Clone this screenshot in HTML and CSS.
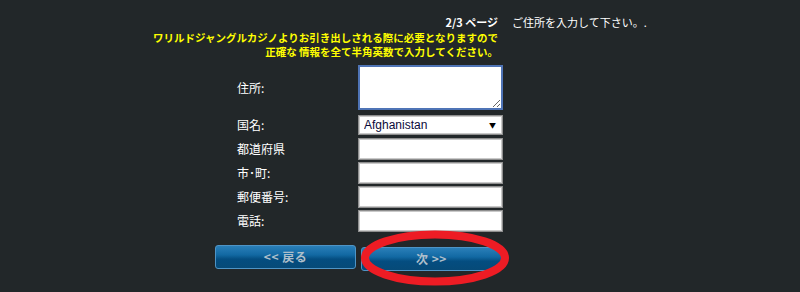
FILE: index.html
```html
<!DOCTYPE html>
<html lang="ja">
<head>
<meta charset="utf-8">
<link rel="stylesheet" href="styles.css">
</head>
<body>
<div class="page">
  <div class="header">
    <div class="header-left">
      <div class="step">2/3 ページ</div>
      <div class="notice">ワリルドジャングルカジノよりお引き出しされる際に必要となりますので</div>
      <div class="notice">正確な 情報を全て半角英数で入力してください。</div>
    </div>
    <div class="header-right">ご住所を入力して下さい。.</div>
  </div>

  <div class="form">
    <label class="label">住所:</label>
    <textarea class="field area"></textarea>

    <label class="label row-select">国名:</label>
    <div class="select-wrap row-select">
      <select class="field select"><option>Afghanistan</option></select>
      <span class="arrow">▼</span>
    </div>

    <label class="label">都道府県</label>
    <input class="field text" type="text">

    <label class="label">市･町:</label>
    <input class="field text" type="text">

    <label class="label">郵便番号:</label>
    <input class="field text" type="text">

    <label class="label">電話:</label>
    <input class="field text" type="text">
  </div>

  <div class="buttons">
    <button class="btn">&lt;&lt; 戻る</button>
    <div class="next-wrap">
      <button class="btn">次 &gt;&gt;</button>
      <svg class="circle" width="152" height="58" viewBox="0 0 152 58">
        <ellipse cx="76" cy="28" rx="70" ry="23.5" fill="none" stroke="#ed1c24" stroke-width="8"/>
      </svg>
    </div>
  </div>
</div>
</body>
</html>
```
FILE: styles.css
```css
html, body {
  margin: 0;
  padding: 0;
  background: #222729;
}
body {
  font-family: "Noto Sans CJK JP", "Noto Sans", sans-serif;
  color: #ffffff;
}
.page {
  width: 800px;
  height: 292px;
  padding-top: 15px;
  box-sizing: border-box;
}
.header {
  display: flex;
  align-items: flex-start;
}
.header-left {
  width: 498px;
  text-align: right;
}
.step {
  font-size: 11px;
  font-weight: bold;
  line-height: 14px;
  margin-bottom: 2px;
}
.notice {
  font-size: 10.5px;
  font-weight: bold;
  line-height: 14px;
  color: #ffff00;
  white-space: nowrap;
}
.header-right {
  margin-left: 14px;
  font-size: 11px;
  line-height: 14px;
}
.form {
  margin-top: 6px;
  margin-left: 237px;
  display: grid;
  grid-template-columns: 121px 145px;
  row-gap: 2px;
  align-items: center;
}
.label {
  font-size: 12px;
  line-height: 16px;
  white-space: nowrap;
}
.row-select {
  margin-top: 3px;
  margin-bottom: 1px;
}
.field {
  box-sizing: border-box;
  width: 145px;
  margin: 0;
  background: #ffffff;
  border: 1px solid #8e8e8e;
  box-shadow: inset 0 0 0 1px #c9c9c9;
  border-radius: 0;
  outline: none;
}
.area {
  height: 45px;
  border: 2px solid #4f74b6;
  box-shadow: none;
  display: block;
}
.text {
  height: 22px;
  display: block;
}
.select-wrap {
  position: relative;
  width: 145px;
  height: 20px;
}
.select {
  display: block;
  -webkit-appearance: none;
  appearance: none;
  height: 20px;
  line-height: 18px;
  padding: 0 0 0 5px;
  font-family: "Liberation Sans", Arial, sans-serif;
  font-size: 12px;
  color: #0a0a3a;
}
.arrow {
  position: absolute;
  right: 7px;
  top: 4px;
  font-size: 7px;
  line-height: 12px;
  color: #000;
  pointer-events: none;
}
.buttons {
  margin-top: 13px;
  margin-left: 215px;
  display: flex;
  gap: 5px;
}
.btn {
  width: 141px;
  height: 24px;
  margin: 0;
  padding: 0;
  border: 1px solid #4e94c6;
  border-radius: 3px;
  background: linear-gradient(#2a7fb8 0%, #1269a3 40%, #044d80 60%, #064a78 100%);
  color: #aebfcb;
  font-family: "Noto Sans CJK JP", sans-serif;
  font-weight: bold;
  font-size: 12px;
  letter-spacing: 0.5px;
  line-height: 20px;
}
.next-wrap {
  position: relative;
  width: 141px;
  height: 24px;
}
.circle {
  position: absolute;
  left: -2px;
  top: -15px;
}
```
